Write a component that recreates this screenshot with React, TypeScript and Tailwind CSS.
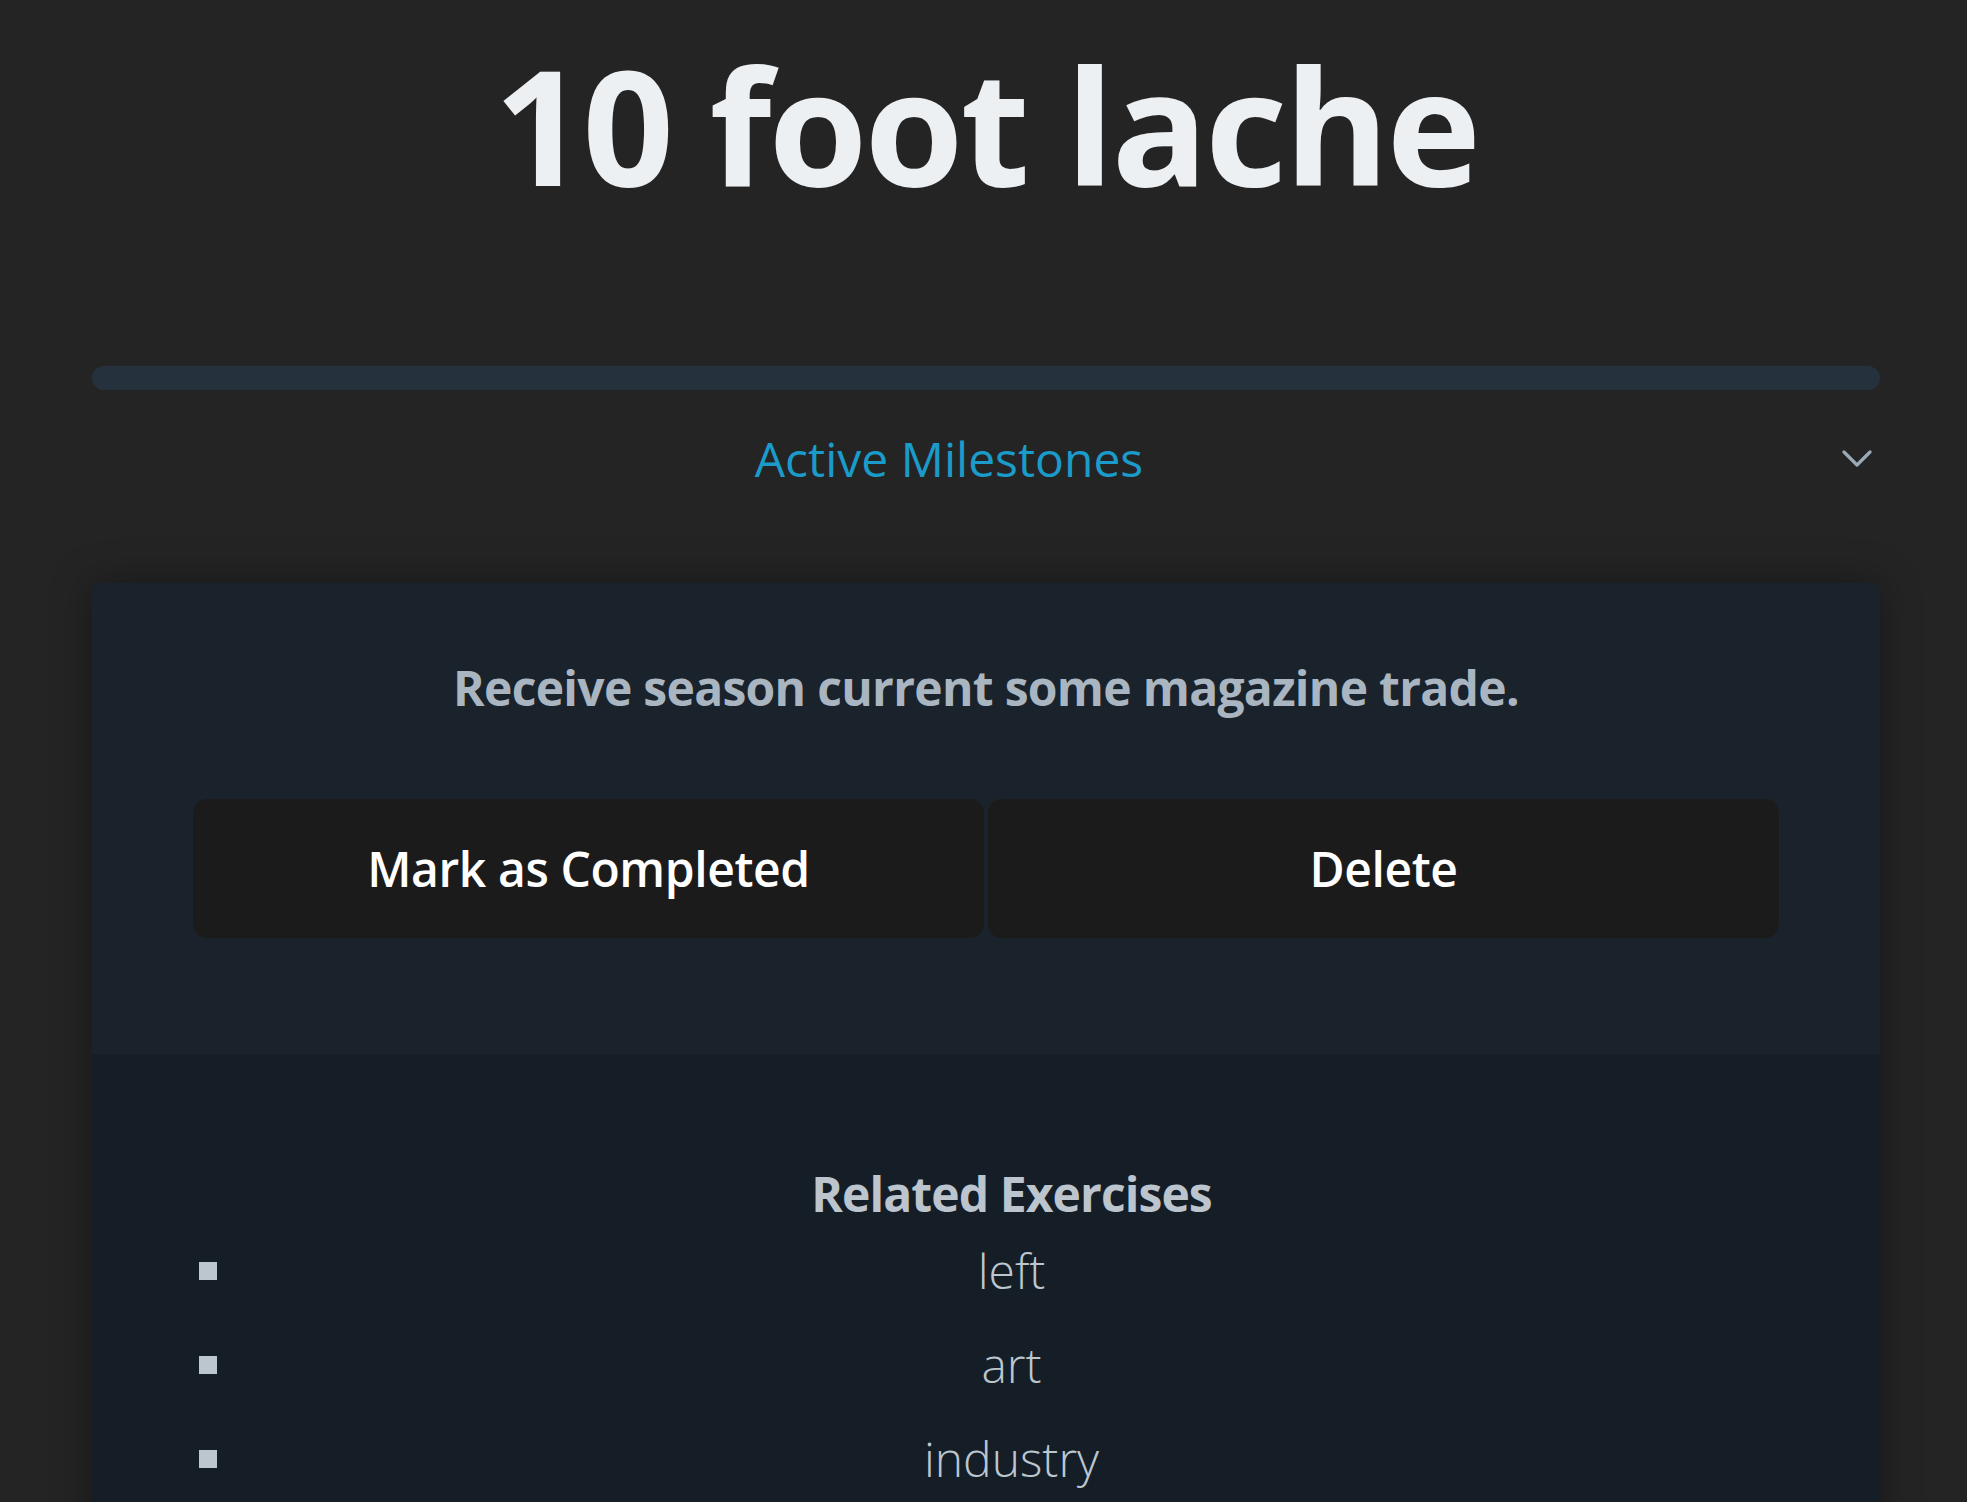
import React from "react";

const exercises = ["left", "art", "industry"];

function Chevron() {
  return (
    <svg width="30" height="18" viewBox="0 0 30 18" fill="none">
      <path
        d="M2 2 L15 15 L28 2"
        stroke="#9aa9b6"
        strokeWidth="3.2"
        strokeLinecap="round"
        strokeLinejoin="round"
      />
    </svg>
  );
}

export default function App() {
  return (
    <div className="min-h-screen bg-[#242424] font-['Open_Sans','Noto_Sans',sans-serif] overflow-hidden">
      <div className="ml-[92px] w-[1788px]">
        <h1 className="mt-[44px] text-center text-[160px] font-bold leading-none tracking-[-3px] text-[#edf0f3]">
          10 foot lache
        </h1>

        <div className="mt-[162px] h-[24px] rounded-full bg-[#25323d]" />

        <div className="mt-[33px] flex items-center">
          <h2 className="flex-1 text-center text-[48px] leading-[72px] text-[#1a9bc9]">
            Active Milestones
          </h2>
          <div className="flex w-[74px] justify-end pr-[8px]">
            <Chevron />
          </div>
        </div>

        <div className="mt-[88px] overflow-hidden rounded-[8px] shadow-[0_0_40px_rgba(0,0,0,0.35)]">
          <div className="bg-[#1a232c] px-[101px] pt-[69px] pb-[116px]">
            <h3 className="text-center text-[48px] font-bold leading-[72px] tracking-[-0.7px] text-[#a9b6c1]">
              Receive season current some magazine trade.
            </h3>
            <div className="mt-[75px] grid grid-cols-2 gap-[4px]">
              <button className="h-[139px] rounded-[14px] bg-[#1b1b1b] text-[48px] font-semibold tracking-[-0.4px] text-white">
                Mark as Completed
              </button>
              <button className="h-[139px] rounded-[14px] bg-[#1b1b1b] text-[48px] font-semibold tracking-[-0.4px] text-white">
                Delete
              </button>
            </div>
          </div>

          <div className="bg-[#151e27] px-[101px] pt-[110px] pb-[40px]">
            <h4 className="pl-[51px] text-center text-[48px] font-bold leading-[60px] tracking-[-0.9px] text-[#bcc5cd]">
              Related Exercises
            </h4>
            <ul>
              {exercises.map((ex) => (
                <li key={ex} className="flex h-[94px] items-center">
                  <span className="ml-[6px] mr-[27px] h-[18px] w-[18px] bg-[#bcc6cf]" />
                  <span className="flex-1 text-center text-[48px] font-light text-[#bcc6cf]">
                    {ex}
                  </span>
                </li>
              ))}
            </ul>
          </div>
        </div>
      </div>
    </div>
  );
}
